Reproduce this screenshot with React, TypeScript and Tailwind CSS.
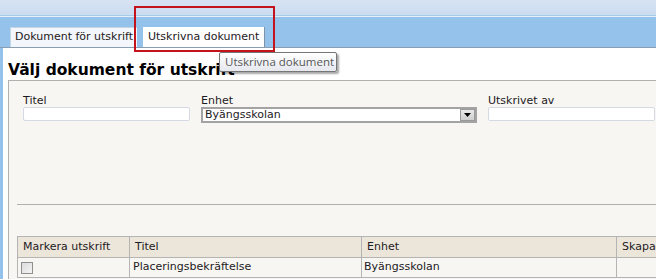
export default function App() {
  return (
    <div className="relative h-[279px] w-[656px] overflow-hidden bg-white font-['DejaVu_Sans',Verdana,sans-serif] text-[11px] text-[#1e1a24]">
      {/* top header band */}
      <div className="h-[15px] bg-gradient-to-b from-[#d7e3f2] to-[#cbdcef]" />
      <div className="h-px bg-[#a8cbea]" />
      <div className="h-px bg-[#e4eff9]" />
      <div className="flex h-[31px] items-end gap-[6px] border-b border-[#8a9eb2] bg-[#94c2ea] pl-[10px]">
        <div className="flex h-[20px] w-[127px] items-center overflow-hidden whitespace-nowrap border-l border-t border-[#c5d6e6] bg-[#f3f6fa] pl-[4px]">
          Dokument för utskrift
        </div>
        <div className="flex h-[20px] w-[122px] items-center whitespace-nowrap border-r border-[#7e93a8] bg-white pl-[5px]">
          Utskrivna dokument
        </div>
      </div>

      <div className="flex">
        <div className="w-[3px] shrink-0 bg-[#94c2ea]" />
        <div className="flex-1 pl-[5px]">
          <h1 className="h-[20px] mt-[12px] whitespace-nowrap text-[15.5px] font-bold leading-[20px] text-black">
            Välj dokument för utskrift
          </h1>
          <div className="h-[220px] w-[700px] border-l border-t border-[#b1b1b1] bg-[#f7f6f2]">
            <div className="flex gap-[11px] pl-[14px] pt-[13px]">
              <div className="flex w-[167px] flex-col">
                <span className="leading-[13px]">Titel</span>
                <div className="h-[14px] rounded-[2px] border border-[#d4d9e3] bg-white" />
              </div>
              <div className="flex w-[276px] flex-col">
                <span className="leading-[13px]">Enhet</span>
                <div className="flex h-[16px] items-center border-2 border-[#a3a3a3] bg-white pl-[2px]">
                  <span className="flex-1 leading-[12px]">Byängsskolan</span>
                  <span className="flex h-[12px] w-[15px] items-center justify-center border border-[#9a9a9a] bg-gradient-to-b from-[#e9e9e9] to-[#cfcfcf]">
                    <svg width="7" height="4" viewBox="0 0 7 4">
                      <path d="M0 0h7L3.5 4z" fill="#000" />
                    </svg>
                  </span>
                </div>
              </div>
              <div className="flex w-[167px] flex-col">
                <span className="leading-[13px]">Utskrivet av</span>
                <div className="h-[14px] rounded-[2px] border border-[#d4d9e3] bg-white" />
              </div>
            </div>

            <div className="ml-[8px] mt-[81px] border-t border-[#b1b1b1]" />

            <table className="ml-[8px] mt-[31px] w-[800px] table-fixed border-collapse">
              <colgroup>
                <col className="w-[112px]" />
                <col className="w-[232px]" />
                <col className="w-[255px]" />
                <col />
              </colgroup>
              <thead>
                <tr className="h-[21px] bg-[#ece6da]">
                  <th className="border border-[#b4b4b4] pl-[5px] text-left font-normal">Markera utskrift</th>
                  <th className="border border-[#b4b4b4] pl-[5px] text-left font-normal">Titel</th>
                  <th className="border border-[#b4b4b4] pl-[5px] text-left font-normal">Enhet</th>
                  <th className="border border-[#b4b4b4] pl-[5px] text-left font-normal">Skapad</th>
                </tr>
              </thead>
              <tbody>
                <tr className="h-[20px]">
                  <td className="border border-[#b4b4b4] pl-[3px]">
                    <span className="block h-[12px] w-[12px] border border-[#8f8f8f] bg-gradient-to-br from-[#dcdcdc] to-[#f4f4f4]" />
                  </td>
                  <td className="border border-[#b4b4b4] pl-[3px]">Placeringsbekräftelse</td>
                  <td className="border border-[#b4b4b4] pl-[2px]">Byängsskolan</td>
                  <td className="border border-[#b4b4b4]" />
                </tr>
              </tbody>
            </table>
          </div>
        </div>
      </div>

      {/* annotation rectangle */}
      <div className="absolute left-[134px] top-[6px] h-[46px] w-[141px] border-2 border-[#c3131c]" />

      {/* tooltip */}
      <div className="absolute left-[219px] top-[52px] flex h-[20px] w-[118px] items-center whitespace-nowrap rounded-[2px] border border-[#767676] bg-gradient-to-b from-white to-[#e6e8ef] pl-[5px] font-['Open_Sans',sans-serif] text-[11.5px] text-[#575757] shadow-[2px_2px_2px_rgba(0,0,0,0.35)]">
        Utskrivna dokument
      </div>
    </div>
  );
}
